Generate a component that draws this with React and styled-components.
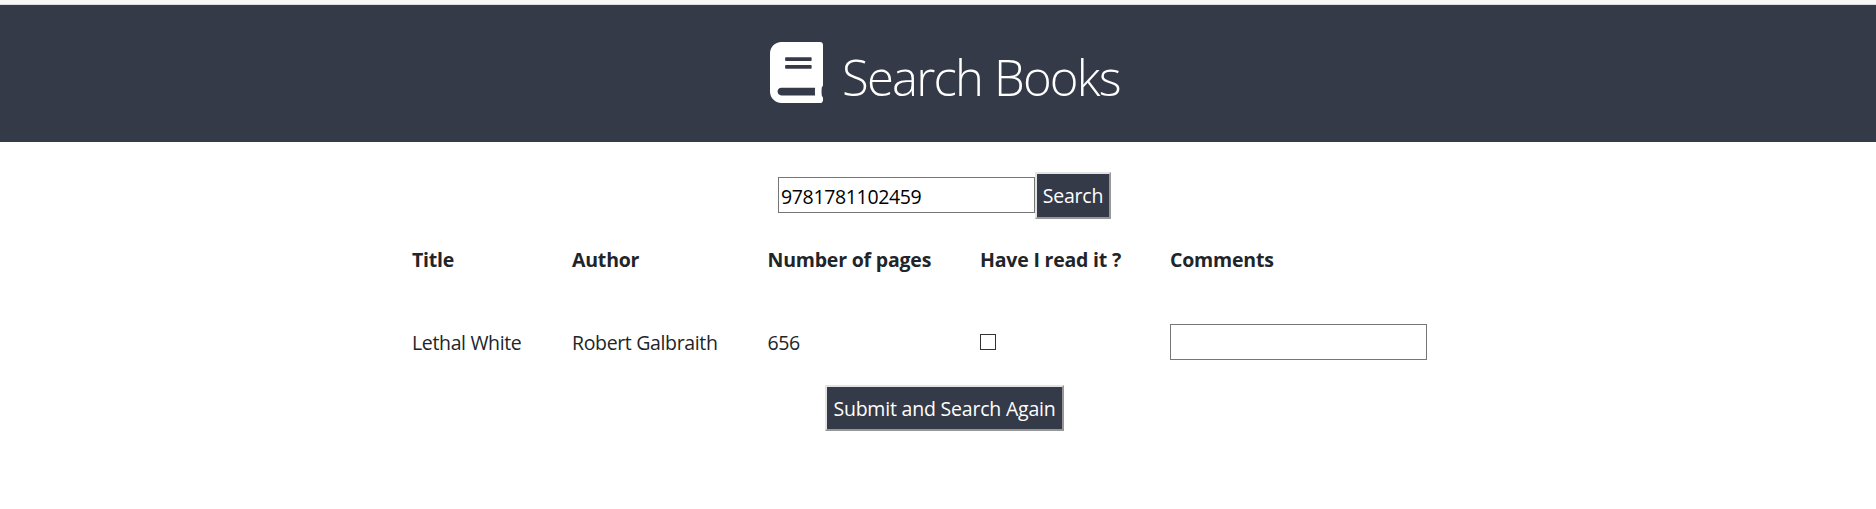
import React from "react";
import styled, { createGlobalStyle } from "styled-components";

const GlobalStyle = createGlobalStyle`
  *, *::before, *::after { box-sizing: border-box; }
  body {
    margin: 0;
    background: #fff;
    color: #212529;
    font-family: "Segoe UI", "Open Sans", "Noto Sans", sans-serif;
    font-size: 19.5px;
    line-height: 30px;
  }
`;

const TopEdge = styled.div`
  height: 5px;
  background: #f7f7f7;
  border-bottom: 1px solid #dcdcdc;
`;

const Header = styled.header`
  display: flex;
  align-items: flex-start;
  height: 137px;
  padding: 37px 0 0 770px;
  background: #353a48;
  color: #fff;
`;

const BookIcon = styled.svg`
  width: 53px;
  height: 61px;
  fill: currentColor;
`;

const Heading = styled.h1`
  margin: 5px 0 0 19px;
  font-size: 49px;
  font-weight: 300;
  line-height: 60px;
  letter-spacing: -1.8px;
  word-spacing: 1px;
  white-space: nowrap;
`;

const SearchForm = styled.form`
  display: flex;
  align-items: flex-start;
  height: 47px;
  margin: 30px 0 0 778px;
`;

const TextInput = styled.input`
  display: block;
  width: 257px;
  height: 36px;
  margin-top: ${(p) => p.$offset || 0}px;
  padding: 3px 2px 0;
  border: 1px solid #767676;
  border-radius: 0;
  background: #fff;
  color: #000;
  font: inherit;
  letter-spacing: -0.35px;
  outline: none;
`;

const Button = styled.button`
  display: block;
  width: ${(p) => p.$width}px;
  height: ${(p) => p.$height}px;
  padding: 1px 0 0;
  border: 2px solid;
  border-color: #e3e3e3 #979797 #979797 #e3e3e3;
  border-radius: 0;
  background: #353a48;
  color: #fff;
  font: inherit;
  letter-spacing: -0.2px;
  white-space: nowrap;
`;

const BookTable = styled.div`
  display: grid;
  grid-template-columns: 160px 195.5px 212.5px 190px 257px;
  grid-template-rows: 30px 36px;
  row-gap: 49px;
  align-items: center;
  margin: 26px 0 0 412px;
`;

const Cell = styled.div`
  padding-top: 2px;
  letter-spacing: -0.35px;
  white-space: nowrap;
`;

const HeadCell = styled(Cell)`
  padding-top: 0;
  font-weight: 700;
  letter-spacing: -0.2px;
`;

const Checkbox = styled.input.attrs({ type: "checkbox" })`
  display: block;
  appearance: none;
  width: 16px;
  height: 16px;
  margin: 0;
  border: 1px solid #333;
  background: #fff;
`;

const SubmitRow = styled.div`
  margin: 25px 0 0 825px;
`;

export default function App() {
  return (
    <>
      <GlobalStyle />
      <TopEdge />
      <Header>
        <BookIcon viewBox="0 0 448 512" preserveAspectRatio="none" aria-hidden="true">
          <path d="M448 360V24c0-13.3-10.7-24-24-24H96C43 0 0 43 0 96v320c0 53 43 96 96 96h328c13.3 0 24-10.7 24-24v-16c0-7.5-3.5-14.3-8.9-18.7-4.2-15.4-4.2-59.3 0-74.7 5.4-4.3 8.9-11.1 8.9-18.6zM128 134c0-3.3 2.7-6 6-6h212c3.3 0 6 2.7 6 6v20c0 3.3-2.7 6-6 6H134c-3.3 0-6-2.7-6-6v-20zm0 64c0-3.3 2.7-6 6-6h212c3.3 0 6 2.7 6 6v20c0 3.3-2.7 6-6 6H134c-3.3 0-6-2.7-6-6v-20zm253.4 250H96c-17.7 0-32-14.3-32-32 0-17.6 14.4-32 32-32h285.4c-1.9 17.1-1.9 46.9 0 64z" />
        </BookIcon>
        <Heading>Search Books</Heading>
      </Header>
      <SearchForm onSubmit={(e) => e.preventDefault()}>
        <TextInput $offset={5} defaultValue="9781781102459" />
        <Button $width={76} $height={47}>Search</Button>
      </SearchForm>
      <BookTable>
        <HeadCell>Title</HeadCell>
        <HeadCell>Author</HeadCell>
        <HeadCell>Number of pages</HeadCell>
        <HeadCell>Have I read it ?</HeadCell>
        <HeadCell>Comments</HeadCell>
        <Cell>Lethal White</Cell>
        <Cell>Robert Galbraith</Cell>
        <Cell>656</Cell>
        <Checkbox />
        <TextInput />
      </BookTable>
      <SubmitRow>
        <Button $width={239} $height={46}>Submit and Search Again</Button>
      </SubmitRow>
    </>
  );
}
